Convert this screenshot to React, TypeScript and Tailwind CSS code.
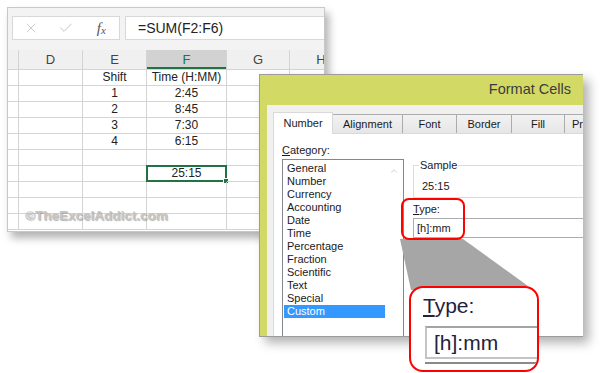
import { X, Check, ChevronUp } from "lucide-react";

const CATEGORIES = [
    "General",
    "Number",
    "Currency",
    "Accounting",
    "Date",
    "Time",
    "Percentage",
    "Fraction",
    "Scientific",
    "Text",
    "Special",
    "Custom",
];

const COLUMNS = [
    { key: "rh", label: "", width: "w-[11px]" },
    { key: "D", label: "D", width: "w-[64px]" },
    { key: "E", label: "E", width: "w-[64px]" },
    { key: "F", label: "F", width: "w-[80px]" },
    { key: "G", label: "G", width: "w-[63px]" },
    { key: "H", label: "H", width: "w-[63px]" },
];

// [E, F] per row, rest of the cells stay empty
const ROWS: [string, string][] = [
    ["Shift", "Time (H:MM)"],
    ["1", "2:45"],
    ["2", "8:45"],
    ["3", "7:30"],
    ["4", "6:15"],
    ["", ""],
    ["", "25:15"],
    ["", ""],
    ["", ""],
    ["", ""],
];

const TABS = [
    { label: "Alignment", width: "w-[70px]" },
    { label: "Font", width: "w-[54px]" },
    { label: "Border", width: "w-[55px]" },
    { label: "Fill", width: "w-[53px]" },
];

function Worksheet() {
    return (
        <div className="absolute left-[7px] top-[7px] w-[318px] h-[225px] border border-[#c8c8c8] bg-white overflow-hidden shadow-[4px_6px_8px_rgba(0,0,0,0.3)]">
            {/* formula bar */}
            <div className="h-[42px] bg-[#f3f3f3] pt-[8px] pl-[4px] flex items-start gap-[5px]">
                <div className="w-[108px] h-[24px] shrink-0 bg-white border border-[#d8d8d8] flex items-center">
                    <div className="w-[36px] flex justify-center">
                        <X size={16} strokeWidth={1.3} color="#c4c4c4" />
                    </div>
                    <div className="w-[36px] flex justify-center">
                        <Check size={16} strokeWidth={1.5} color="#c4c4c4" />
                    </div>
                    <div className="w-[36px] flex justify-center items-end font-['Liberation_Serif',serif] italic text-[15px] leading-[18px] text-[#555]">
                        f<span className="text-[11px] leading-[14px]">x</span>
                    </div>
                </div>
                <div className="flex-1 h-[24px] bg-white border border-[#d8d8d8] border-r-0 pl-[12px] text-[14px] leading-[22px] text-[#222] whitespace-nowrap">
                    =SUM(F2:F6)
                </div>
            </div>

            {/* column headers */}
            <div className="flex h-[20px] bg-[#f0f0f0] border-b border-[#d4d4d4] whitespace-nowrap">
                {COLUMNS.map((c) => (
                    <div
                        key={c.key}
                        className={`${c.width} shrink-0 border-r border-[#d4d4d4] flex items-center justify-center text-[13px] ${
                            c.key === "F" ? "bg-[#d2d2d2] text-[#217346] shadow-[inset_0_-2px_0_#217346]" : "text-[#444]"
                        }`}
                    >
                        {c.label}
                    </div>
                ))}
            </div>

            {/* cells */}
            {ROWS.map(([e, f], i) => (
                <div key={i} className="flex h-[16px] text-[12px] leading-[15px] text-[#222] whitespace-nowrap">
                    {COLUMNS.map((c) => (
                        <div
                            key={c.key}
                            className={`${c.width} shrink-0 border-r border-b border-[#d4d4d4] text-center relative`}
                        >
                            {c.key === "E" ? e : c.key === "F" ? f : ""}
                            {c.key === "F" && i === 6 && (
                                <>
                                    <div className="absolute -left-[1px] -top-[1px] -right-[1px] -bottom-[1px] border-2 border-[#217346]" />
                                    <div className="absolute -right-[3px] -bottom-[3px] w-[6px] h-[6px] bg-[#217346] border border-white" />
                                </>
                            )}
                        </div>
                    ))}
                </div>
            ))}

            <div className="absolute left-[17px] top-[200px] text-[13.5px] leading-[16px] font-bold text-[#c6c6c6] whitespace-nowrap [text-shadow:1px_1px_1px_rgba(0,0,0,0.3)]">
                ©TheExcelAddict.com
            </div>
        </div>
    );
}

function FormatCellsDialog() {
    return (
        <div className="absolute left-[259px] top-[74px] w-[324px] h-[263px] border border-[#9c9c9c] border-r-0 bg-[#f0f0f0] overflow-hidden flex flex-col shadow-[6px_6px_10px_rgba(0,0,0,0.3)]">
            <div className="h-[30px] shrink-0 bg-[#d3d965] flex items-center justify-end pr-[12px] text-[14.5px] text-[#3c3c3c]">
                Format Cells
            </div>
            <div className="flex-1 flex min-h-0">
                <div className="w-[7px] shrink-0 bg-[#d3d965]" />
                <div className="flex-1 pl-[6px] pt-[7px] flex flex-col text-[11px] text-[#1a1a1a]">
                    <div className="flex items-end h-[21px] whitespace-nowrap">
                        <div className="relative z-10 w-[60px] h-[22px] -mb-[1px] shrink-0 bg-white border border-[#d9d9d9] border-b-0 flex items-center justify-center">
                            Number
                        </div>
                        {TABS.map((t) => (
                            <div
                                key={t.label}
                                className={`${t.width} h-[19px] shrink-0 bg-gradient-to-b from-[#f2f2f2] to-[#e6e6e6] border border-[#acacac] border-l-0 border-b-0 flex items-center justify-center`}
                            >
                                {t.label}
                            </div>
                        ))}
                        {/* last tab runs past the crop, only its first letters show */}
                        <div className="w-[18px] h-[19px] shrink-0 bg-gradient-to-b from-[#f2f2f2] to-[#e6e6e6] border-t border-[#acacac] pl-[7px] leading-[18px] overflow-hidden">
                            Pr
                        </div>
                    </div>

                    <div className="flex-1 bg-white border-t border-l border-[#d9d9d9] pl-[8px] pt-[10px] flex gap-[9px]">
                        <div className="w-[122px] shrink-0">
                            <div className="leading-[13px]">
                                <span className="underline">C</span>ategory:
                            </div>
                            <div className="mt-[2px] h-[190px] border border-[#828790] flex">
                                <div className="flex-1 pt-[2px] pl-[1px]">
                                    {CATEGORIES.map((c) => (
                                        <div
                                            key={c}
                                            className={`h-[13px] leading-[13px] pl-[3px] ${
                                                c === "Custom" ? "bg-[#3399ff] text-white" : ""
                                            }`}
                                        >
                                            {c}
                                        </div>
                                    ))}
                                </div>
                                <div className="w-[18px] flex justify-center pt-[6px]">
                                    <ChevronUp size={10} strokeWidth={2} color="#c8c8c8" />
                                </div>
                            </div>
                        </div>

                        <div className="flex-1 pt-[21px] whitespace-nowrap">
                            <div className="relative h-[33px] border-t border-l border-b border-[#dcdcdc] pl-[8px] pt-[14px] leading-[13px]">
                                <span className="absolute -top-[7px] left-[5px] bg-white px-[1px] leading-[13px]">Sample</span>
                                25:15
                            </div>
                            <div className="mt-[5px] leading-[13px]">
                                <span className="underline">T</span>ype:
                            </div>
                            <div className="mt-[2px] h-[20px] border border-r-0 border-[#abadb3] pl-[3px] leading-[18px]">[h]:mm</div>
                        </div>
                    </div>
                </div>
            </div>
        </div>
    );
}

function Callout() {
    return (
        <>
            <svg className="absolute left-0 top-0 pointer-events-none" width="604" height="373" viewBox="0 0 604 373">
                <polygon points="400,239 463,239 528,286 411,290" fill="#a6a6a6" />
            </svg>
            <div className="absolute left-[401px] top-[198px] w-[64px] h-[42px] border-2 border-[#ff0000] rounded-[8px]" />
            <div className="absolute left-[409px] top-[286px] w-[130px] h-[86px] border-2 border-[#ff0000] rounded-[14px] bg-white overflow-hidden pl-[12px] pt-[6px] text-[#22223c] whitespace-nowrap">
                <div className="text-[21px] leading-[24px]">
                    <span className="underline">T</span>ype:
                </div>
                <div className="mt-[8px] ml-[2px] h-[33px] border-2 border-[#c4c4c4] border-t-[#a4a4a4] border-r-0 pl-[7px] text-[21px] leading-[29px]">
                    [h]:mm
                </div>
                <div className="mt-[3px] ml-[2px] border-t-2 border-[#8a8a8a]" />
            </div>
        </>
    );
}

export default function App() {
    return (
        <div className="relative w-[604px] h-[373px] bg-white overflow-hidden font-['Liberation_Sans',Arial,sans-serif]">
            <Worksheet />
            <FormatCellsDialog />
            <Callout />
        </div>
    );
}
